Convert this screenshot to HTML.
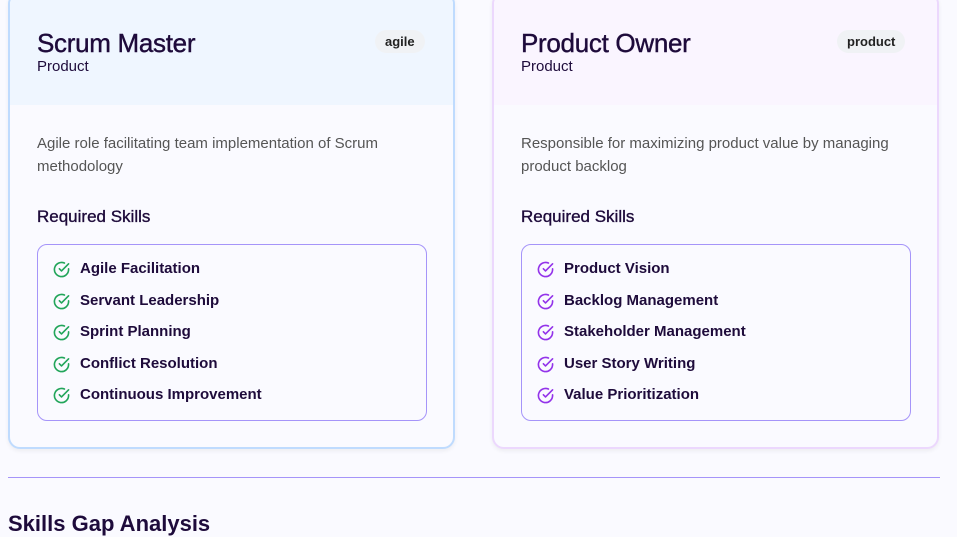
<!DOCTYPE html>
<html><head><style>
*{box-sizing:border-box;margin:0;padding:0}
body{width:957px;height:525px;overflow:hidden;background:#fafaff;font-family:"Liberation Sans",sans-serif;color:#1e0b3b;position:relative}
.card{position:absolute;top:-8px;width:447px;height:457px;border:2px solid #bfdbfe;border-radius:12px;background:#fafaff;overflow:hidden;box-shadow:0 2px 4px rgba(0,0,0,.06)}
.c1{left:8px}.c2{left:492px;border-color:#ecd8fd}
.head{height:111px;background:#eff6ff;position:relative}
.c2 .head{background:#faf5ff}
h2{position:absolute;left:27px;top:34px;font-size:26px;font-weight:normal;letter-spacing:-.3px;-webkit-text-stroke:.4px #1e0b3b}
.sub{position:absolute;left:27px;top:64px;font-size:15px}
.badge{position:absolute;top:36px;height:23px;border-radius:12px;background:#f0f2f5;font-size:13px;font-weight:bold;line-height:23px;padding:0 10px;color:#222}
.desc{position:absolute;left:27px;top:138px;width:390px;font-size:15px;line-height:23px;color:#555}
h3{position:absolute;left:27px;top:213px;font-size:17px;font-weight:normal;-webkit-text-stroke:.35px #1e0b3b}
.box{position:absolute;left:27px;top:250px;width:390px;height:177px;border:1px solid #a594f9;border-radius:10px;padding:15px 0 0 15px}
.it{height:31.5px;display:flex;align-items:flex-start;font-size:15px;font-weight:bold}
.it svg{margin:1px 10px 0 0}
.sec{position:absolute;left:8px;top:477px;width:932px;border-top:1px solid #a594f9}
.gap{position:absolute;left:8px;top:511px;font-size:22px;font-weight:bold}
</style></head><body>
<div class="card c1"><div class="head"><h2>Scrum Master</h2><div class="sub">Product</div><div class="badge" style="left:365px">agile</div></div>
<div class="desc">Agile role facilitating team implementation of Scrum methodology</div>
<h3>Required Skills</h3>
<div class="box">
<div class="it"><svg width="17" height="17" viewBox="0 0 24 24" fill="none" stroke="#22a55a" stroke-width="2.3" stroke-linecap="round" stroke-linejoin="round"><path d="M22 11.1V12a10 10 0 1 1-5.9-9.1"/><path d="M22 4 12 14l-3-3"/></svg>Agile Facilitation</div>
<div class="it"><svg width="17" height="17" viewBox="0 0 24 24" fill="none" stroke="#22a55a" stroke-width="2.3" stroke-linecap="round" stroke-linejoin="round"><path d="M22 11.1V12a10 10 0 1 1-5.9-9.1"/><path d="M22 4 12 14l-3-3"/></svg>Servant Leadership</div>
<div class="it"><svg width="17" height="17" viewBox="0 0 24 24" fill="none" stroke="#22a55a" stroke-width="2.3" stroke-linecap="round" stroke-linejoin="round"><path d="M22 11.1V12a10 10 0 1 1-5.9-9.1"/><path d="M22 4 12 14l-3-3"/></svg>Sprint Planning</div>
<div class="it"><svg width="17" height="17" viewBox="0 0 24 24" fill="none" stroke="#22a55a" stroke-width="2.3" stroke-linecap="round" stroke-linejoin="round"><path d="M22 11.1V12a10 10 0 1 1-5.9-9.1"/><path d="M22 4 12 14l-3-3"/></svg>Conflict Resolution</div>
<div class="it"><svg width="17" height="17" viewBox="0 0 24 24" fill="none" stroke="#22a55a" stroke-width="2.3" stroke-linecap="round" stroke-linejoin="round"><path d="M22 11.1V12a10 10 0 1 1-5.9-9.1"/><path d="M22 4 12 14l-3-3"/></svg>Continuous Improvement</div>
</div></div>
<div class="card c2"><div class="head"><h2>Product Owner</h2><div class="sub">Product</div><div class="badge" style="left:343px">product</div></div>
<div class="desc">Responsible for maximizing product value by managing product backlog</div>
<h3>Required Skills</h3>
<div class="box">
<div class="it"><svg width="17" height="17" viewBox="0 0 24 24" fill="none" stroke="#9333ea" stroke-width="2.3" stroke-linecap="round" stroke-linejoin="round"><path d="M22 11.1V12a10 10 0 1 1-5.9-9.1"/><path d="M22 4 12 14l-3-3"/></svg>Product Vision</div>
<div class="it"><svg width="17" height="17" viewBox="0 0 24 24" fill="none" stroke="#9333ea" stroke-width="2.3" stroke-linecap="round" stroke-linejoin="round"><path d="M22 11.1V12a10 10 0 1 1-5.9-9.1"/><path d="M22 4 12 14l-3-3"/></svg>Backlog Management</div>
<div class="it"><svg width="17" height="17" viewBox="0 0 24 24" fill="none" stroke="#9333ea" stroke-width="2.3" stroke-linecap="round" stroke-linejoin="round"><path d="M22 11.1V12a10 10 0 1 1-5.9-9.1"/><path d="M22 4 12 14l-3-3"/></svg>Stakeholder Management</div>
<div class="it"><svg width="17" height="17" viewBox="0 0 24 24" fill="none" stroke="#9333ea" stroke-width="2.3" stroke-linecap="round" stroke-linejoin="round"><path d="M22 11.1V12a10 10 0 1 1-5.9-9.1"/><path d="M22 4 12 14l-3-3"/></svg>User Story Writing</div>
<div class="it"><svg width="17" height="17" viewBox="0 0 24 24" fill="none" stroke="#9333ea" stroke-width="2.3" stroke-linecap="round" stroke-linejoin="round"><path d="M22 11.1V12a10 10 0 1 1-5.9-9.1"/><path d="M22 4 12 14l-3-3"/></svg>Value Prioritization</div>
</div></div>
<div class="sec"></div>
<div class="gap">Skills Gap Analysis</div>
</body></html>
